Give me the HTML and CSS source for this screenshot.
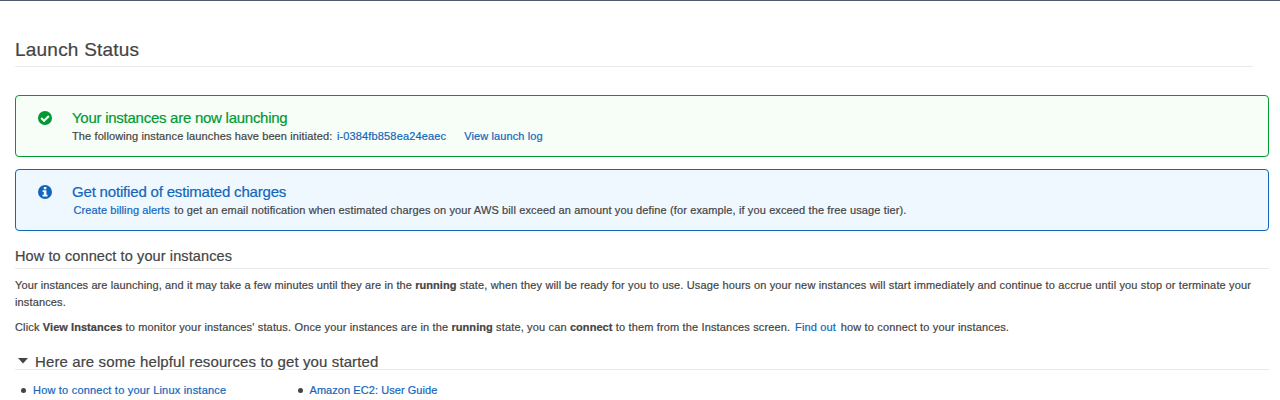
FILE: index.html
```html
<!DOCTYPE html>
<html lang="en">
<head>
<meta charset="utf-8">
<title>Launch Status</title>
<link rel="stylesheet" href="styles.css">
</head>
<body>
<main class="page">
  <h1 class="page-title">Launch Status</h1>
  <section class="alert alert-success">
    <svg class="alert-icon" viewBox="0 0 14 14"><circle cx="7" cy="7" r="7" fill="#009933"/><path d="M3.2 7.1 6 9.8 10.9 4.9" fill="none" stroke="#fff" stroke-width="2.1"/></svg>
    <div class="alert-body">
      <h2 class="alert-title success-title">Your instances are now launching</h2>
      <p class="alert-text"><span class="launch-message">The following instance launches have been initiated:</span><a class="link instance-link">i-0384fb858ea24eaec</a><a class="link log-link">View launch log</a></p>
    </div>
  </section>
  <section class="alert alert-info">
    <svg class="alert-icon" viewBox="0 0 14 14"><circle cx="7" cy="7" r="7" fill="#1166bb"/><path d="M5.8 2.1h2.6v2.1H5.8zM4.6 5.3h3.8v4.5h1.1v1.8H4.5V9.8h1.3V7.1H4.6z" fill="#fff"/></svg>
    <div class="alert-body">
      <h2 class="alert-title info-title">Get notified of estimated charges</h2>
      <p class="alert-text"><a class="link billing-link">Create billing alerts</a><span class="billing-message">to get an email notification when estimated charges on your AWS bill exceed an amount you define (for example, if you exceed the free usage tier).</span></p>
    </div>
  </section>
  <h2 class="section-title">How to connect to your instances</h2>
  <p class="copy"><span class="tight">Your instances are launching, and it may take a few minutes until they are in the </span><b>running</b><span class="loose"> state, when they will be ready for you to use. Usage hours on your new instances will start immediately and continue to accrue until you stop or terminate your</span><br>instances.</p>
  <p class="copy copy-monitor">Click <b>View Instances</b> to monitor your instances' status. Once your instances are in the <b>running</b> state, you can <b>connect</b> to them from the Instances screen. <a class="link find-link">Find out</a> how to connect to your instances.</p>
  <h2 class="resources-title"><svg class="caret" viewBox="0 0 10 6"><path d="M0 0h10L5 5.5z" fill="#444"/></svg><span>Here are some helpful resources to get you started</span></h2>
  <ul class="resources">
    <li class="resource"><a class="link linux-link">How to connect to your Linux instance</a></li>
    <li class="resource"><a class="link guide-link">Amazon EC2: User Guide</a></li>
  </ul>
</main>
</body>
</html>
```
FILE: styles.css
```css
* { box-sizing: border-box; margin: 0; padding: 0; }
body { background: #fff; color: #444; font: 11px/17px "Liberation Sans", Arial, sans-serif; letter-spacing: .13px; -webkit-text-stroke: .2px; }
.page { height: 400px; overflow: hidden; border-top: 1px solid #545b6b; padding: 35px 11px 0 15px; white-space: nowrap; }
.page-title { height: 31px; margin-right: 16px; border-bottom: 1px solid #eaeaea; font-size: 19px; line-height: 27px; font-weight: 400; letter-spacing: .22px; }
.alert { display: flex; height: 62px; border: 1px solid; border-radius: 4px; padding: 14px 22px 0; }
.alert-success { margin-top: 28px; border-color: #009933; background: #f7fef8; }
.alert-info { margin-top: 12px; border-color: #1166bb; background: #f0f8ff; }
.alert-icon { width: 14px; height: 14px; margin-top: 1px; flex: none; }
.alert-body { margin-left: 20px; }
.alert-title { font-size: 15px; line-height: 15px; font-weight: 400; }
.success-title { color: #009933; letter-spacing: -.26px; }
.info-title { color: #1166bb; letter-spacing: -.18px; }
.alert-text { display: flex; line-height: 17px; margin-top: 3px; }
.link { color: #1166bb; }
.launch-message { letter-spacing: .115px; }
.instance-link { margin-left: 4.5px; letter-spacing: .15px; }
.log-link { margin-left: 18px; letter-spacing: .12px; }
.billing-link { margin-left: 1.5px; letter-spacing: .1px; }
.billing-message { margin-left: 4.5px; letter-spacing: .122px; }
.section-title { height: 22px; margin-top: 16px; border-bottom: 1px solid #eaeaea; font-size: 14.5px; line-height: 19px; font-weight: 400; letter-spacing: .11px; }
.copy { margin-top: 8px; }
.copy b { letter-spacing: .06px; }
.tight { letter-spacing: .105px; }
.loose { letter-spacing: .147px; }
.copy-monitor { letter-spacing: .154px; }
.find-link { margin: 0 1.5px; }
.resources-title { display: flex; height: 19px; margin-top: 15px; border-bottom: 1px solid #eaeaea; font-size: 15px; line-height: 21px; font-weight: 400; letter-spacing: .115px; }
.caret { width: 10px; height: 6px; margin: 7px 7px 0 3px; }
.resources { display: flex; margin-top: 12px; list-style: none; }
.resource { display: flex; width: 276.5px; padding-left: 6px; }
.resource::before { content: ""; width: 5px; height: 5px; margin: 6px 7px 0 0; border-radius: 50%; background: #444; }
.linux-link { letter-spacing: .2px; }
.guide-link { letter-spacing: .06px; }
```
